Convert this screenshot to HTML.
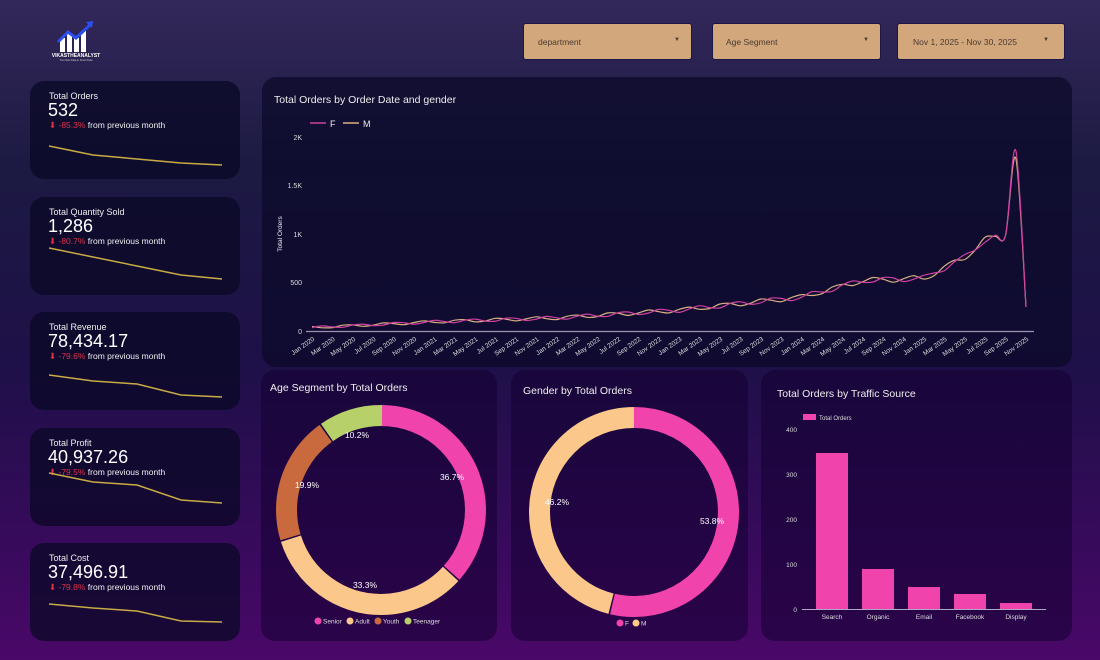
<!DOCTYPE html>
<html><head><meta charset="utf-8">
<style>
*{margin:0;padding:0;box-sizing:border-box}
html,body{width:1100px;height:660px;overflow:hidden}
body{font-family:"Liberation Sans",sans-serif;color:#fff;position:relative;
background:linear-gradient(180deg,#33285a 0%,#1c1a42 25%,#1e1048 55%,#3a0a5e 85%,#4a0868 100%);}
.card{position:absolute;border-radius:14px;background:rgba(10,8,38,0.75)}
.kpi{left:30px;width:210px;height:98px}
.kpi .t{position:absolute;left:19px;top:10px;font-size:9px;color:#eee}
.kpi .v{position:absolute;left:18px;top:19px;font-size:18px;color:#fff}
.kpi .c{position:absolute;left:19px;top:39px;font-size:8.5px;color:#eee}
.kpi .c b{color:#e0304a;font-weight:normal}
.kpi svg{position:absolute;left:0;top:0}
.dd{position:absolute;top:23px;height:37px;background:#d2a77c;border:1px solid #1a1648;border-radius:3px;font-size:8.5px;color:#4a3a30}
.dd span{position:absolute;top:13px}
.dd i{position:absolute;top:13px;font-style:normal;font-size:6px}
.ttl{position:absolute;font-size:10.5px;color:#eee}
</style></head><body>

<svg style="position:absolute;left:50px;top:18px" width="52" height="44" viewBox="0 0 52 44">
<rect x="10" y="20" width="5" height="14" fill="#fff"/><rect x="17" y="16" width="5" height="18" fill="#fff"/><rect x="24" y="20" width="5" height="14" fill="#fff"/><rect x="31" y="13" width="5" height="21" fill="#fff"/>
<polyline points="8,24 18,14 26,20 40,7" fill="none" stroke="#2a4ef0" stroke-width="3"/>
<polygon points="36,4 43,3 42,10" fill="#2a4ef0"/>
<text x="26" y="39" font-size="5" font-weight="bold" fill="#fff" text-anchor="middle" font-family="Liberation Sans">VIKASTHEANALYST</text>
<text x="26" y="43" font-size="2.5" fill="#ccc" text-anchor="middle" font-family="Liberation Sans">Turn Raw Data to Smart Data</text>
</svg>

<div class="dd" style="left:523px;width:169px"><span style="left:14px">department</span><i style="left:150px">▼</i></div>
<div class="dd" style="left:712px;width:169px"><span style="left:13px">Age Segment</span><i style="left:150px">▼</i></div>
<div class="dd" style="left:897px;width:168px"><span style="left:15px">Nov 1, 2025 - Nov 30, 2025</span><i style="left:145px">▼</i></div>

<div class="card kpi" style="top:81px"><div class="t">Total Orders</div><div class="v">532</div><div class="c"><b>⬇ -85.3%</b> from previous month</div>
<svg width="210" height="98"><polyline points="19,65 63,74 107,78 151,82 192,84" fill="none" stroke="#c9ab45" stroke-width="1.5"/></svg></div>
<div class="card kpi" style="top:197px"><div class="t">Total Quantity Sold</div><div class="v">1,286</div><div class="c"><b>⬇ -80.7%</b> from previous month</div>
<svg width="210" height="98"><polyline points="19,51 63,60 107,69 151,78 192,82" fill="none" stroke="#c9ab45" stroke-width="1.5"/></svg></div>
<div class="card kpi" style="top:312px"><div class="t">Total Revenue</div><div class="v">78,434.17</div><div class="c"><b>⬇ -79.6%</b> from previous month</div>
<svg width="210" height="98"><polyline points="19,63 63,69 107,72 151,83 192,85" fill="none" stroke="#c9ab45" stroke-width="1.5"/></svg></div>
<div class="card kpi" style="top:428px"><div class="t">Total Profit</div><div class="v">40,937.26</div><div class="c"><b>⬇ -79.5%</b> from previous month</div>
<svg width="210" height="98"><polyline points="19,45 63,54 107,57 151,72 192,75" fill="none" stroke="#c9ab45" stroke-width="1.5"/></svg></div>
<div class="card kpi" style="top:543px"><div class="t">Total Cost</div><div class="v">37,496.91</div><div class="c"><b>⬇ -79.8%</b> from previous month</div>
<svg width="210" height="98"><polyline points="19,61 63,65 107,68 151,78 192,79" fill="none" stroke="#c9ab45" stroke-width="1.5"/></svg></div>

<div class="card" style="left:262px;top:77px;width:810px;height:290px;background:rgba(10,8,40,0.7)"></div>
<div class="ttl" style="left:274px;top:94px">Total Orders by Order Date and gender</div>
<svg id="lc" style="position:absolute;left:0;top:0" width="1100" height="370" font-family="Liberation Sans">
<line x1="310" y1="123" x2="326" y2="123" stroke="#d040a0" stroke-width="1.5"/><text x="330" y="127" font-size="9" fill="#eee">F</text>
<line x1="343" y1="123" x2="359" y2="123" stroke="#d8b080" stroke-width="1.5"/><text x="363" y="127" font-size="9" fill="#eee">M</text>
<g font-size="7" fill="#ddd" text-anchor="end">
<text x="302" y="140">2K</text><text x="302" y="188">1.5K</text><text x="302" y="237">1K</text><text x="302" y="285">500</text><text x="302" y="334">0</text>
</g>
<text transform="translate(282,234) rotate(-90)" font-size="6.5" fill="#eee" text-anchor="middle">Total Orders</text>
<line x1="306" y1="331.5" x2="1034" y2="331.5" stroke="#9a90b0" stroke-width="1.2"/>
<g id="xl" font-size="6.5" fill="#ddd"></g>
<path id="pm" fill="none" stroke="#d8b080" stroke-width="1.2"/>
<path id="pf" fill="none" stroke="#d040a0" stroke-width="1.2"/>
</svg>

<div class="card" style="left:261px;top:370px;width:236px;height:271px;background:rgba(20,0,50,0.55)"></div>
<div class="ttl" style="left:270px;top:382px">Age Segment by Total Orders</div>
<svg style="position:absolute;left:0;top:0" width="760" height="660" font-family="Liberation Sans">
<g transform="translate(381,510) rotate(-90)" fill="none" stroke-width="21">
<circle r="94.5" stroke="#f044ac" stroke-dasharray="217 377" stroke-dashoffset="0"/>
<circle r="94.5" stroke="#fbc78a" stroke-dasharray="197.5 397" stroke-dashoffset="-218.5"/>
<circle r="94.5" stroke="#c96a3e" stroke-dasharray="117 478" stroke-dashoffset="-417.5"/>
<circle r="94.5" stroke="#b8d06a" stroke-dasharray="59.5 535" stroke-dashoffset="-536"/>
</g>
<g font-size="8.5" fill="#fff" text-anchor="middle">
<text x="452" y="480">36.7%</text><text x="365" y="588">33.3%</text><text x="307" y="488">19.9%</text><text x="357" y="438">10.2%</text>
</g>
<g font-size="6.5" fill="#ddd">
<circle cx="318" cy="621" r="3.5" fill="#f044ac"/><text x="323" y="623.5">Senior</text>
<circle cx="350" cy="621" r="3.5" fill="#fbc78a"/><text x="355" y="623.5">Adult</text>
<circle cx="378" cy="621" r="3.5" fill="#c96a3e"/><text x="383" y="623.5">Youth</text>
<circle cx="408" cy="621" r="3.5" fill="#b8d06a"/><text x="413" y="623.5">Teenager</text>
</g>
</svg>

<div class="card" style="left:511px;top:370px;width:237px;height:271px;background:rgba(20,0,50,0.55)"></div>
<div class="ttl" style="left:523px;top:385px">Gender by Total Orders</div>
<svg style="position:absolute;left:0;top:0" width="760" height="660" font-family="Liberation Sans">
<g transform="translate(634,512) rotate(-90)" fill="none" stroke-width="21">
<circle r="94.5" stroke="#f044ac" stroke-dasharray="318.5 276" stroke-dashoffset="0"/>
<circle r="94.5" stroke="#fbc78a" stroke-dasharray="273.5 321" stroke-dashoffset="-320"/>
</g>
<g font-size="8.5" fill="#fff" text-anchor="middle">
<text x="712" y="524">53.8%</text><text x="557" y="505">46.2%</text>
</g>
<g font-size="6.5" fill="#ddd">
<circle cx="620" cy="623" r="3.5" fill="#f044ac"/><text x="625" y="625.5">F</text>
<circle cx="636" cy="623" r="3.5" fill="#fbc78a"/><text x="641" y="625.5">M</text>
</g>
</svg>

<div class="card" style="left:761px;top:370px;width:311px;height:271px;background:rgba(20,0,50,0.55)"></div>
<div class="ttl" style="left:777px;top:388px">Total Orders by Traffic Source</div>
<svg style="position:absolute;left:0;top:0" width="1100" height="660" font-family="Liberation Sans">
<rect x="803" y="414" width="13" height="6" fill="#f044ac"/><text x="819" y="420" font-size="6" fill="#ddd">Total Orders</text>
<g font-size="6.5" fill="#ddd" text-anchor="end"><text x="797" y="432">400</text><text x="797" y="477">300</text><text x="797" y="522">200</text><text x="797" y="567">100</text><text x="797" y="612">0</text></g>
<g fill="#f044ac"><rect x="816" y="453" width="32" height="156"/><rect x="862" y="569" width="32" height="40"/><rect x="908" y="587" width="32" height="22"/><rect x="954" y="594" width="32" height="15"/><rect x="1000" y="603" width="32" height="6"/></g>
<line x1="802" y1="609.5" x2="1046" y2="609.5" stroke="#b0a8c8" stroke-width="1"/>
<g font-size="6.5" fill="#ddd" text-anchor="middle"><text x="832" y="619">Search</text><text x="878" y="619">Organic</text><text x="924" y="619">Email</text><text x="970" y="619">Facebook</text><text x="1016" y="619">Display</text></g>
</svg>

<script>
var SX=10.2;
var mon=["Jan","Mar","May","Jul","Sep","Nov"],xl=document.getElementById("xl"),h="";
for(var k=0;k<36;k++){var x=312+2*k*SX;var lab=mon[k%6]+" "+(2020+Math.floor(k/6));
h+='<text transform="translate('+(x+3)+',340) rotate(-35)" text-anchor="end">'+lab+'</text>';}
xl.innerHTML=h;
var kp=[[0,35],[12,95],[24,135],[36,215],[48,350],[54,520],[60,545],[64,760],[66,940],[68,990],[69,1820],[70,250]];
function base(i){for(var j=0;j<kp.length-1;j++){if(i>=kp[j][0]&&i<=kp[j+1][0]){var t=(i-kp[j][0])/(kp[j+1][0]-kp[j][0]);return kp[j][1]+t*(kp[j+1][1]-kp[j][1]);}}return 0;}
function path(ph,amp,pk){var P=[];for(var i=0;i<=70;i++){var v=base(i);if(i<68)v+=amp*Math.sin(i*1.7+ph)*(1+i/40);if(i==69)v=pk;P.push([312+i*SX,331-v*0.097]);}
var d="M"+P[0][0].toFixed(1)+","+P[0][1].toFixed(1);
for(var i=0;i<P.length-1;i++){var p0=P[Math.max(0,i-1)],p1=P[i],p2=P[i+1],p3=P[Math.min(P.length-1,i+2)];
var c1x=p1[0]+(p2[0]-p0[0])/6,c1y=p1[1]+(p2[1]-p0[1])/6,c2x=p2[0]-(p3[0]-p1[0])/6,c2y=p2[1]-(p3[1]-p1[1])/6;
d+=" C"+c1x.toFixed(1)+","+c1y.toFixed(1)+" "+c2x.toFixed(1)+","+c2y.toFixed(1)+" "+p2[0].toFixed(1)+","+p2[1].toFixed(1);}
return d;}
document.getElementById("pf").setAttribute("d",path(0,12,1860));
document.getElementById("pm").setAttribute("d",path(2,12,1780));
</script>
</body></html>
